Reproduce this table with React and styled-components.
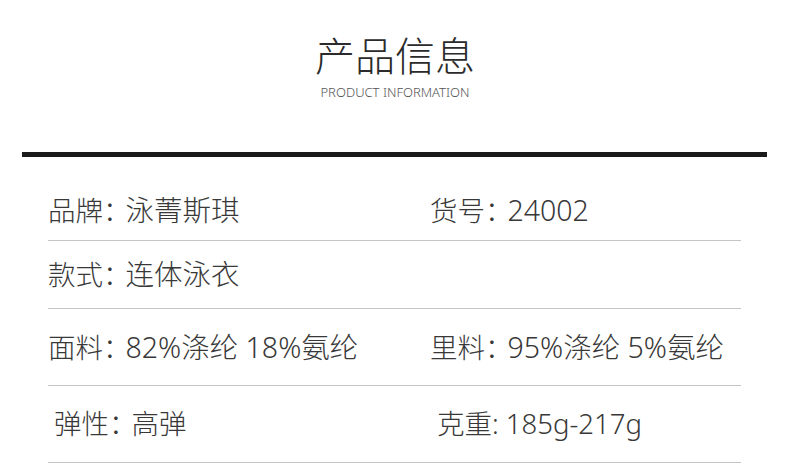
import React from 'react';
import styled, { createGlobalStyle } from 'styled-components';

const Global = createGlobalStyle`
  body {
    margin: 0;
    background: #fff;
    font-family: 'Noto Sans', 'Noto Sans CJK SC', sans-serif;
    color: #333;
  }
`;

const Page = styled.div`
  width: 790px;
  height: 474px;
  overflow: hidden;
  background: #fff;
`;

const Header = styled.header`
  display: flex;
  flex-direction: column;
  align-items: center;
  padding-top: 31px;
  height: 122px;
  box-sizing: border-box;
`;

const Title = styled.h1`
  margin: 0;
  font-family: 'Noto Sans CJK SC', sans-serif;
  font-size: 40px;
  line-height: 46px;
  font-weight: 300;
  color: #2b2b2b;
`;

const Subtitle = styled.div`
  font-size: 13px;
  line-height: 16px;
  margin-top: 7px;
  color: #555;
  font-weight: 300;
`;

const Bar = styled.div`
  margin: 30px 23px 0 22px;
  height: 5px;
  background: #1a1a1a;
`;

const Table = styled.div`
  margin-left: 48px;
  width: 693px;
`;

const Row = styled.div`
  display: grid;
  grid-template-columns: 382px 1fr;
  height: ${p => p.h}px;
  padding-top: ${p => p.pt}px;
  box-sizing: border-box;
  border-bottom: 1px solid #c4c4c4;
`;

const Cell = styled.div`
  font-size: 27.5px;
  line-height: 30px;
  font-weight: 300;
  color: #383838;
  padding-left: ${p => p.shift || 0}px;
  white-space: nowrap;
`;

const Label = styled.span`
  margin-right: ${p => p.tight ? 0 : -5}px;
`;

const Value = styled.span`
  font-size: ${p => p.size || 28.5}px;
`;

const rows = [
  { h: 84, pt: 38, cells: [['品牌：', '泳菁斯琪'], ['货号：', '24002']] },
  { h: 68, pt: 18, cells: [['款式：', '连体泳衣'], null] },
  { h: 77, pt: 23, cells: [['面料：', '82%涤纶 18%氨纶'], ['里料：', '95%涤纶 5%氨纶']] },
  { h: 77, pt: 23, cells: [['弹性：', '高弹', 27.5], ['克重:', ' 185g-217g', 27.5]], shift: [6, 7] },
];

export default function App() {
  return (
    <Page>
      <Global />
      <Header>
        <Title>产品信息</Title>
        <Subtitle>PRODUCT INFORMATION</Subtitle>
      </Header>
      <Bar />
      <Table>
        {rows.map((r, i) => (
          <Row key={i} h={r.h} pt={r.pt}>
            {r.cells.map((c, j) => (
              <Cell key={j} shift={r.shift ? r.shift[j] : 0}>
                {c && (
                  <>
                    <Label tight={c[0].endsWith(':')}>{c[0]}</Label>
                    <Value size={c[2]}>{c[1]}</Value>
                  </>
                )}
              </Cell>
            ))}
          </Row>
        ))}
      </Table>
    </Page>
  );
}
